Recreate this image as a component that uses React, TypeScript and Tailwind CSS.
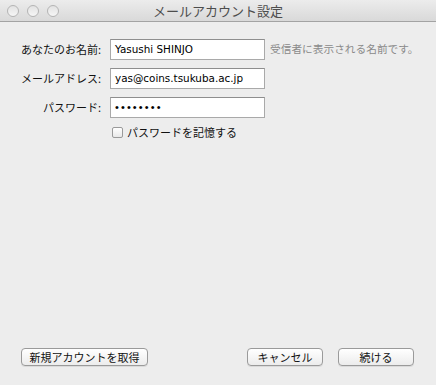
import React from "react";

const jp = { fontFamily: '"Noto Sans CJK JP", "Noto Sans", sans-serif' };
const latin = { fontFamily: '"DejaVu Sans", "Noto Sans CJK JP", sans-serif' };

function Light() {
  return (
    <div className="w-[12px] h-[12px] rounded-full border border-[#b4b4b4] bg-gradient-to-b from-[#e2e2e2] to-[#f6f6f6]" />
  );
}

function Field({ value, dots }: { value: string; dots?: boolean }) {
  return (
    <div
      className="w-[155px] h-[21px] bg-white border border-[#a9a9a9] border-t-[#8e8e8e] flex items-center pl-[4px] text-[10.4px] text-black leading-none"
      style={latin}
    >
      {dots ? <span className="tracking-[2.1px] text-[11px]" style={{ fontFamily: '"Liberation Sans", sans-serif' }}>{value}</span> : value}
    </div>
  );
}

function Btn({ label, w }: { label: string; w: string }) {
  return (
    <div
      className={`${w} h-[18px] rounded-[4px] border border-[#9a9a9a] bg-gradient-to-b from-white to-[#ececec] shadow-[0_1px_0_rgba(0,0,0,0.08)] flex items-center justify-center text-[11px] text-[#111] leading-none`}
      style={jp}
    >
      {label}
    </div>
  );
}

export default function App() {
  return (
    <div className="w-[436px] h-[385px] bg-[#ededed] flex flex-col" style={jp}>
      <div className="relative h-[22px] shrink-0 bg-gradient-to-b from-[#ececec] to-[#d9d9d9] border-b border-[#a3a3a3] flex items-center justify-center">
        <div className="absolute left-[7px] top-[5px] flex gap-[8px]">
          <Light />
          <Light />
          <Light />
        </div>
        <span className="text-[13px] text-[#4d4d4d] leading-none">メールアカウント設定</span>
      </div>

      <div className="flex flex-col gap-[8px] pt-[17px] pl-[19px]">
        <div className="flex items-center h-[21px]">
          <div className="w-[83px] text-right text-[11px] text-[#111] leading-none pr-[1px]">あなたのお名前:</div>
          <div className="ml-[8px]"><Field value="Yasushi SHINJO" /></div>
          <div className="ml-[5px] text-[10.7px] text-[#8a8a8a] leading-none">受信者に表示される名前です。</div>
        </div>
        <div className="flex items-center h-[21px]">
          <div className="w-[83px] text-right text-[11px] text-[#111] leading-none pr-[1px]">メールアドレス:</div>
          <div className="ml-[8px]"><Field value="yas@coins.tsukuba.ac.jp" /></div>
        </div>
        <div className="flex items-center h-[21px]">
          <div className="w-[83px] text-right text-[11px] text-[#111] leading-none pr-[1px]">パスワード:</div>
          <div className="ml-[8px]"><Field value="••••••••" dots /></div>
        </div>
        <div className="flex items-center h-[14px] -mt-[1px] pl-[93px]">
          <div className="w-[11px] h-[11px] rounded-[2px] border border-[#9a9a9a] bg-gradient-to-b from-white to-[#e8e8e8]" />
          <span className="ml-[4px] text-[11px] text-[#111] leading-none">パスワードを記憶する</span>
        </div>
      </div>

      <div className="mt-auto mb-[19px] flex items-center pl-[21px] pr-[22px]">
        <Btn label="新規アカウントを取得" w="w-[127px]" />
        <div className="flex-1" />
        <Btn label="キャンセル" w="w-[76px]" />
        <div className="w-[15px]" />
        <Btn label="続ける" w="w-[76px]" />
      </div>
    </div>
  );
}
